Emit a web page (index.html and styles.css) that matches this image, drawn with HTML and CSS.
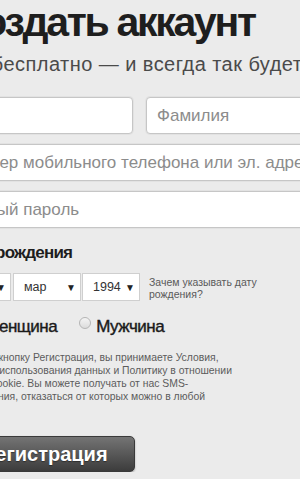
FILE: index.html
```html
<!DOCTYPE html>
<html lang="ru">
<head>
    <meta charset="UTF-8">
    <title>Создать аккаунт</title>
    <meta name="viewport" content="width=device-width, initial-scale=1.0">
    <link rel="stylesheet" href="styles.css">
</head>
<body>
    <div class="signup">
        <h1>Создать аккаунт</h1>
        <p class="lead">Это бесплатно — и всегда так будет.</p>

        <div class="row">
            <input type="text" class="field half" placeholder="Имя">
            <input type="text" class="field half" placeholder="Фамилия">
        </div>
        <input type="text" class="field" placeholder="Номер мобильного телефона или эл. адрес">
        <input type="password" class="field" placeholder="Новый пароль">

        <div class="label">Дата рождения</div>
        <div class="birthday">
            <div class="select day">17 <span class="arrow">▼</span></div>
            <div class="select month">мар <span class="arrow">▼</span></div>
            <div class="select year">1994 <span class="arrow">▼</span></div>
            <a class="why">Зачем указывать дату<br>рождения?</a>
        </div>

        <div class="gender">
            <label><span class="radio"></span>Женщина</label>
            <label><span class="radio"></span>Мужчина</label>
        </div>

        <p class="terms">
            Нажимая кнопку Регистрация, вы принимаете Условия,<br>
            Политику использования данных и Политику в отношении<br>
            файлов cookie. Вы можете получать от нас SMS-<br>
            уведомления, отказаться от которых можно в любой<br>
            момент.
        </p>

        <button class="submit">Регистрация</button>
    </div>
</body>
</html>
```

FILE: styles.css
```css
body {
    margin: 0;
    background-color: #ebebeb;
    font-family: "Liberation Sans", Arial, sans-serif;
    overflow: hidden;
}
.signup {
    margin-left: -45px;
    width: 370px;
}
h1 {
    margin: 0;
    font-size: 41px;
    line-height: 44px;
    font-weight: bold;
    letter-spacing: -2.3px;
    color: #1e1e1e;
    white-space: nowrap;
}
.lead {
    margin: 8px 0 0 -5px;
    font-size: 20px;
    line-height: 24px;
    letter-spacing: 0.45px;
    color: #4a4a4a;
    white-space: nowrap;
}
.row {
    display: flex;
    gap: 13px;
    margin-top: 21px;
}
.field {
    display: block;
    box-sizing: border-box;
    width: 100%;
    height: 37px;
    margin: 0 0 10px;
    padding: 0 10px;
    border: 1px solid #c6c6c6;
    border-radius: 4px;
    box-shadow: 0 0 0 1px #e2e2e2;
    background: #fff;
    font-family: inherit;
    font-size: 17px;
    color: #333;
}
.field::placeholder {
    color: #8c8c8c;
}
.half {
    width: 178px;
    flex: none;
}
.label {
    margin-top: 14px;
    font-size: 17px;
    line-height: 22px;
    font-weight: bold;
    letter-spacing: -0.8px;
    color: #1e1e1e;
}
.birthday {
    display: flex;
    align-items: flex-start;
    margin-top: 9px;
}
.select {
    display: flex;
    align-items: center;
    justify-content: space-between;
    box-sizing: border-box;
    height: 28px;
    padding: 0 4px 0 10px;
    border: 1px solid #cfcfcf;
    background: #fff;
    font-size: 12.5px;
    color: #333;
}
.arrow {
    font-size: 10px;
    color: #222;
}
.day {
    width: 56px;
}
.month {
    width: 68px;
    margin-left: 2px;
}
.year {
    width: 58px;
    margin-left: 1px;
}
.why {
    margin: 3px 0 0 9px;
    font-size: 10.5px;
    line-height: 12px;
    color: #5a5a5a;
}
.gender {
    display: flex;
    gap: 22px;
    margin-top: 15px;
    padding-left: 12px;
    font-size: 17px;
    line-height: 22px;
    letter-spacing: -0.5px;
    color: #1a1a1a;
    -webkit-text-stroke: 0.4px #1a1a1a;
}
.gender label {
    display: flex;
    align-items: flex-start;
}
.radio {
    width: 10px;
    height: 10px;
    margin: 1px 5px 0 0;
    border: 1px solid #b5b5b5;
    border-radius: 50%;
    background: linear-gradient(#f4f4f4, #dcdcdc);
    -webkit-text-stroke: 0;
}
.terms {
    margin: 13px 0 0 -4px;
    font-size: 10.4px;
    line-height: 13px;
    color: #5c5c5c;
    white-space: nowrap;
}
.submit {
    display: block;
    width: 180px;
    height: 36px;
    margin-top: 20px;
    border: 1px solid #3a3a3a;
    border-radius: 5px;
    background: linear-gradient(#747474, #3c3c3c);
    box-shadow: 0 1px 2px rgba(0, 0, 0, 0.3);
    font-family: inherit;
    font-size: 20px;
    font-weight: bold;
    color: #fff;
    text-shadow: 0 1px 1px rgba(0, 0, 0, 0.4);
}
```
